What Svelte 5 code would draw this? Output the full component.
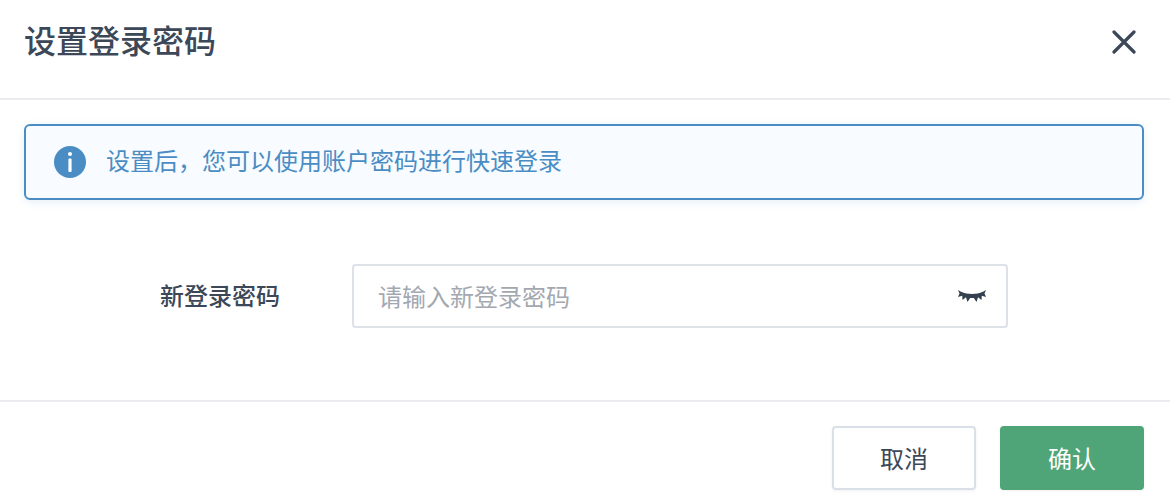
<script lang="ts">
	let password = $state('');
</script>

<div class="dialog">
	<header class="dialog-header">
		<h2>设置登录密码</h2>
		<button class="close" aria-label="关闭">
			<svg width="24" height="24" viewBox="0 0 24 24" fill="none">
				<path d="M2 2 22 22M22 2 2 22" stroke="#3c4858" stroke-width="3.200" stroke-linecap="round" />
			</svg>
		</button>
	</header>

	<div class="dialog-body">
		<div class="alert">
			<svg width="32" height="32" viewBox="0 0 32 32">
				<circle cx="16" cy="16" r="16" fill="#4a8dc4" />
				<circle cx="16" cy="8" r="2" fill="#fff" />
				<rect x="14.4" y="12.500" width="3.200" height="13.500" rx="1" fill="#fff" />
			</svg>
			<span>设置后，您可以使用账户密码进行快速登录</span>
		</div>

		<div class="field">
			<label for="pwd">新登录密码</label>
			<div class="input-wrap">
				<input id="pwd" type="password" placeholder="请输入新登录密码" bind:value={password} />
				<svg class="eye" width="28" height="12" viewBox="0 0 28 12">
					<path d="M0 0 3.500 2C9 4.500 19 4.500 24.500 2L28 0 26.500 3.500 28 7 23.800 5.800 23.500 10 20 7.200 18.500 12 15.800 8H12.200L9.500 12 8 7.200 4.500 10 4.200 5.800 0 7 1.500 3.500Z" fill="#34404f" />
				</svg>
			</div>
		</div>
	</div>

	<footer class="dialog-footer">
		<button class="btn">取消</button>
		<button class="btn primary">确认</button>
	</footer>
</div>

<style>
	:global(body) {
		background: #fff;
	}

	.dialog {
		width: 1170px;
		height: 504px;
		display: flex;
		flex-direction: column;
		font-family: "Noto Sans CJK SC", "Noto Sans", sans-serif;
		color: #3c4858;
		background: #fff;
		overflow: hidden;
	}

	.dialog-header {
		flex-shrink: 0;
		display: flex;
		align-items: center;
		justify-content: space-between;
		padding: 0 34px 14px 24px;
		height: 84px;
		border-bottom: 2px solid #e9ebee;
	}

	h2 {
		margin: 0 0 6px;
		font-size: 32px;
		font-weight: 500;
		line-height: 40px;
	}

	.close {
		border: none;
		background: none;
		padding: 0;
		width: 24px;
		height: 24px;
		display: flex;
	}

	.dialog-body {
		flex: 1;
		padding: 24px 26px 0 24px;
	}

	.alert {
		height: 76px;
		box-sizing: border-box;
		display: flex;
		align-items: center;
		gap: 20px;
		padding: 0 28px;
		border: 2px solid #4a8dc4;
		border-radius: 6px;
		background: #f8fbff;
		box-shadow: 0 2px 8px rgba(74, 141, 196, 0.14);
		color: #4a8dc4;
		font-size: 24px;
	}

	.alert span {
		margin-top: -5px;
	}

	.field {
		margin-top: 64px;
		display: flex;
		align-items: center;
	}

	label {
		width: 328px;
		box-sizing: border-box;
		padding: 0 72px 4px 0;
		text-align: right;
		font-size: 24px;
		font-weight: 500;
	}

	.input-wrap {
		position: relative;
		width: 656px;
		height: 64px;
	}

	input {
		width: 100%;
		height: 100%;
		box-sizing: border-box;
		border: 2px solid #dde2e9;
		border-radius: 4px;
		padding: 0 60px 2px 24px;
		font: inherit;
		font-size: 24px;
		outline: none;
		background: #fff;
	}

	input::placeholder {
		color: #a3a8b0;
		opacity: 1;
	}

	.eye {
		position: absolute;
		right: 22px;
		top: 26px;
	}

	.dialog-footer {
		height: 104px;
		flex-shrink: 0;
		box-sizing: border-box;
		border-top: 2px solid #e9ebee;
		display: flex;
		justify-content: flex-end;
		gap: 24px;
		padding: 24px 26px 0 0;
	}

	.btn {
		width: 144px;
		height: 64px;
		box-sizing: border-box;
		border: 2px solid #d9e0e8;
		border-radius: 4px;
		background: #fff;
		color: #3c4858;
		font: inherit;
		font-size: 24px;
		padding: 0 0 2px;
		box-shadow: 0 1px 3px rgba(60, 72, 88, 0.08);
	}

	.primary {
		border-color: #4fa577;
		background: #4fa577;
		color: #fff;
	}
</style>
